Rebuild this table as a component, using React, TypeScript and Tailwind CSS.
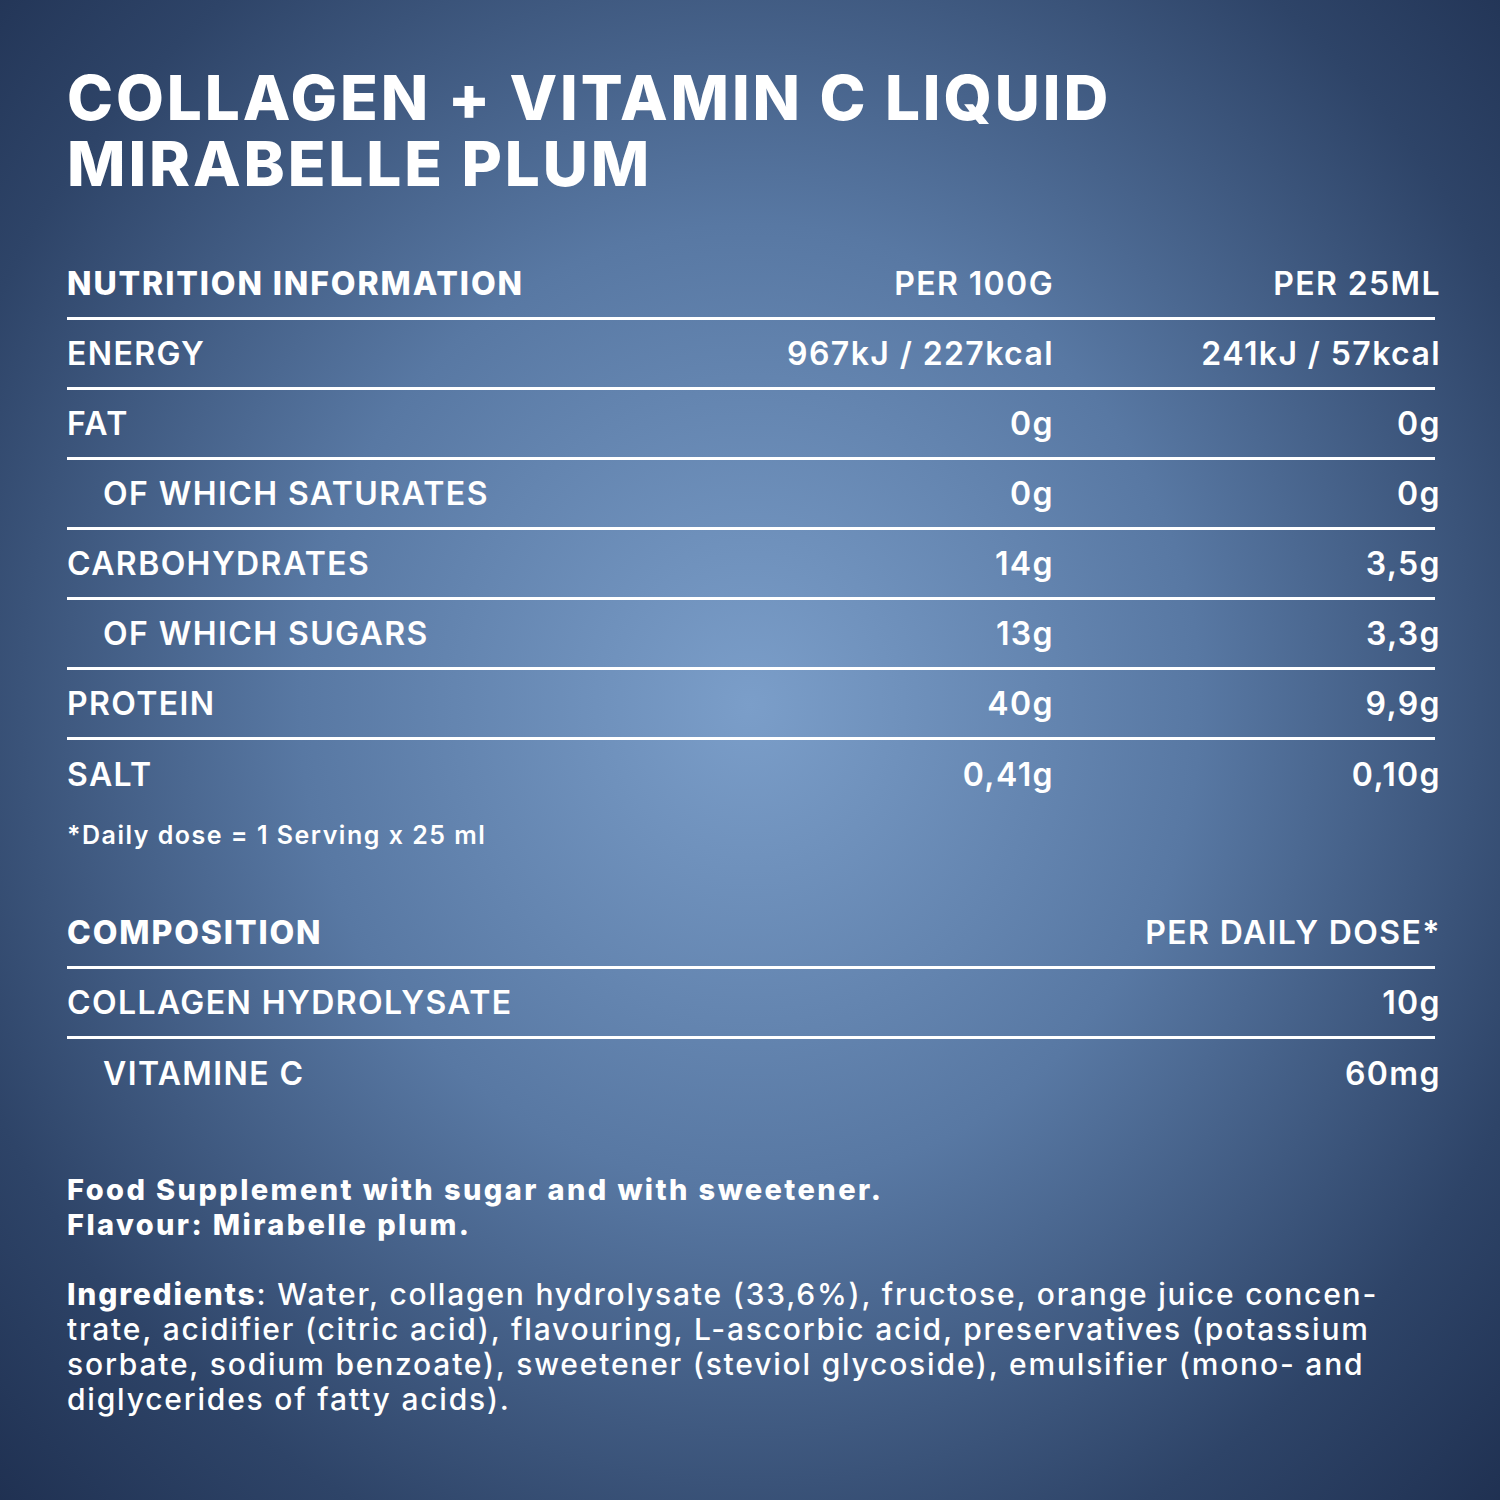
const nutrition = [
  { label: "ENERGY", per100: "967kJ / 227kcal", perDose: "241kJ / 57kcal", sub: false },
  { label: "FAT", per100: "0g", perDose: "0g", sub: false },
  { label: "OF WHICH SATURATES", per100: "0g", perDose: "0g", sub: true },
  { label: "CARBOHYDRATES", per100: "14g", perDose: "3,5g", sub: false },
  { label: "OF WHICH SUGARS", per100: "13g", perDose: "3,3g", sub: true },
  { label: "PROTEIN", per100: "40g", perDose: "9,9g", sub: false },
  { label: "SALT", per100: "0,41g", perDose: "0,10g", sub: false },
];

const composition = [
  { label: "COLLAGEN HYDROLYSATE", value: "10g", sub: false },
  { label: "VITAMINE C", value: "60mg", sub: true },
];

export default function App() {
  return (
    <div
      className="w-[1500px] h-[1500px] text-white bg-[radial-gradient(ellipse_75%_80%_at_50%_47%,#7b9ec9_0%,#5878a3_40%,#2e4468_75%,#1b2b4b_100%)] pl-[67px] pr-[65px] pt-[65px]"
      style={{ fontFamily: "Inter, 'Open Sans', sans-serif" }}
    >
      <h1 className="text-[62px] leading-[66px] font-extrabold tracking-[2.9px] whitespace-nowrap">
        COLLAGEN + VITAMIN C LIQUID
        <br />
        MIRABELLE PLUM
      </h1>

      <div className="mt-[53px]">
        <div className="flex items-center h-[70px] text-[32px] border-b-[3px] border-white">
          <div className="flex-1 font-extrabold tracking-[1.9px]">NUTRITION INFORMATION</div>
          <div className="w-[300px] text-right font-semibold tracking-[1.4px]">PER 100G</div>
          <div className="w-[387px] text-right font-semibold tracking-[1.4px] -mr-[6px]">PER 25ML</div>
        </div>
        {nutrition.map((row, i) => (
          <div
            key={row.label}
            className={
              "flex items-center h-[70px] text-[32px] font-semibold tracking-[1.4px] " +
              (i < nutrition.length - 1 ? "border-b-[3px] border-white" : "")
            }
          >
            <div className={"flex-1 " + (row.sub ? "pl-[36px]" : "")}>{row.label}</div>
            <div className="w-[300px] text-right">{row.per100}</div>
            <div className="w-[387px] text-right -mr-[6px]">{row.perDose}</div>
          </div>
        ))}
        <p className="text-[25px] leading-[30px] font-semibold tracking-[1.5px] mt-[10px]">*Daily dose = 1 Serving x 25 ml</p>
      </div>

      <div className="mt-[49px]">
        <div className="flex items-center h-[70px] text-[32px] border-b-[3px] border-white">
          <div className="flex-1 font-extrabold tracking-[1.9px]">COMPOSITION</div>
          <div className="text-right font-semibold tracking-[1.4px] -mr-[6px]">PER DAILY DOSE*</div>
        </div>
        {composition.map((row, i) => (
          <div
            key={row.label}
            className={
              "flex items-center h-[70px] text-[32px] font-semibold tracking-[1.4px] " +
              (i < composition.length - 1 ? "border-b-[3px] border-white" : "")
            }
          >
            <div className={"flex-1 " + (row.sub ? "pl-[36px]" : "")}>{row.label}</div>
            <div className="text-right -mr-[6px]">{row.value}</div>
          </div>
        ))}
      </div>

      <div className="mt-[63px] text-[29px] leading-[35px] font-extrabold tracking-[2.4px] whitespace-nowrap">
        Food Supplement with sugar and with sweetener.
        <br />
        Flavour: Mirabelle plum.
      </div>

      <div className="mt-[35px] text-[30px] leading-[35px] font-medium tracking-[1.8px] whitespace-nowrap">
        <span className="font-extrabold">Ingredients</span>: Water, collagen hydrolysate (33,6%), fructose, orange juice concen-
        <br />
        trate, acidifier (citric acid), flavouring, L-ascorbic acid, preservatives (potassium
        <br />
        sorbate, sodium benzoate), sweetener (steviol glycoside), emulsifier (mono- and
        <br />
        diglycerides of fatty acids).
      </div>
    </div>
  );
}
